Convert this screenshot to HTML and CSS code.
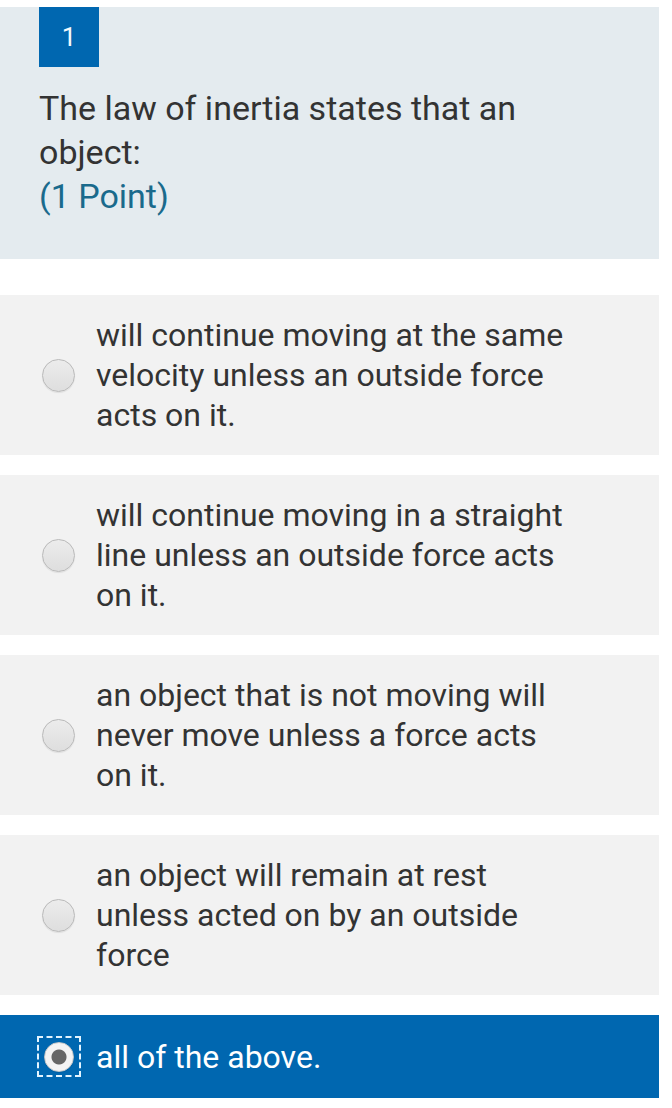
FILE: index.html
```html
<!DOCTYPE html>
<html lang="en">
<head>
<meta charset="utf-8">
<title>Question 1</title>
<link rel="stylesheet" href="styles.css">
</head>
<body>
<div class="page">
  <section class="question">
    <div class="badge">1</div>
    <div class="title">The law of inertia states that an object:<br><span class="points">(1 Point)</span></div>
  </section>
  <div class="choices">
    <label class="choice">
      <span class="radio"></span>
      <span class="text">will continue moving at the same velocity unless an outside force acts on it.</span>
    </label>
    <label class="choice">
      <span class="radio"></span>
      <span class="text">will continue moving in a straight line unless an outside force acts on it.</span>
    </label>
    <label class="choice">
      <span class="radio"></span>
      <span class="text">an object that is not moving will never move unless a force acts on it.</span>
    </label>
    <label class="choice">
      <span class="radio"></span>
      <span class="text">an object will remain at rest unless acted on by an outside force</span>
    </label>
    <label class="choice selected">
      <span class="focus"><span class="radio checked"></span></span>
      <span class="text">all of the above.</span>
    </label>
  </div>
</div>
</body>
</html>
```

FILE: styles.css
```css
html, body {
  margin: 0;
  padding: 0;
  background: #ffffff;
}

body {
  font-family: Roboto, "Noto Sans", "Liberation Sans", sans-serif;
  color: #333333;
}

.page {
  width: 659px;
  padding-top: 7px;
}

.question {
  background: #e4ebef;
  padding: 0 100px 41px 39px;
}

.badge {
  width: 60px;
  height: 60px;
  background: #0067b0;
  color: #f2f8fc;
  font-size: 26px;
  display: flex;
  align-items: center;
  justify-content: center;
}

.title {
  margin-top: 19px;
  font-size: 34px;
  line-height: 44px;
  color: #333333;
}

.points {
  color: #1a6a8c;
}

.choices {
  margin-top: 36px;
  display: flex;
  flex-direction: column;
  gap: 20px;
}

.choice {
  display: flex;
  align-items: center;
  background: #f2f2f2;
  padding: 20px 80px 20px 42px;
}

.text {
  font-size: 32px;
  line-height: 40px;
  color: #333333;
  flex: 1;
}

.radio {
  flex: none;
  box-sizing: border-box;
  width: 33px;
  height: 33px;
  border-radius: 50%;
  border: 1px solid #b9b9b9;
  background: linear-gradient(#ececec, #dedede);
  box-shadow: 0 1px 1px rgba(0, 0, 0, 0.08);
  margin-right: 21px;
}

.choice.selected {
  background: #0067b0;
  padding: 21px 80px 21px 37px;
}

.choice.selected .text {
  color: #ffffff;
}

.focus {
  flex: none;
  box-sizing: border-box;
  width: 44px;
  height: 41px;
  border: 2px dashed #e3f4ff;
  display: flex;
  align-items: center;
  justify-content: center;
  margin-right: 15px;
}

.radio.checked {
  width: 30px;
  height: 30px;
  margin-right: 0;
  border: 1px solid #c8c8c8;
  background: radial-gradient(circle, #666666 0 7px, #f4f4f4 8px);
}
```
